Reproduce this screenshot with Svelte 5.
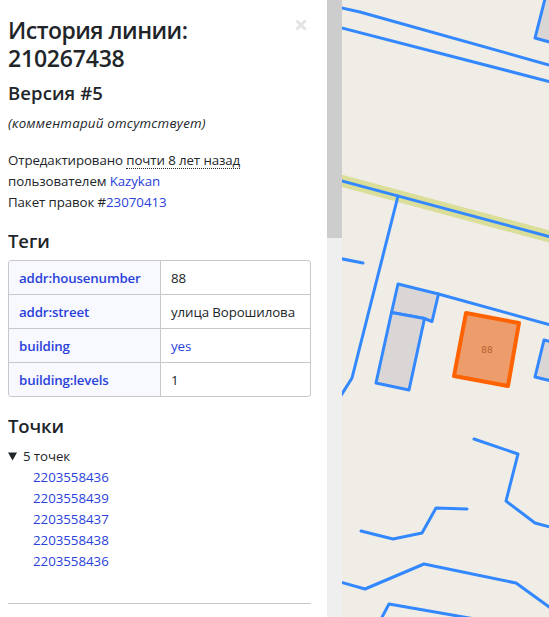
<script>
  const tags = [
    { key: 'addr:housenumber', value: '88' },
    { key: 'addr:street', value: 'улица Ворошилова' },
    { key: 'building', value: 'yes', link: true },
    { key: 'building:levels', value: '1' },
  ];
  const nodes = ['2203558436', '2203558439', '2203558437', '2203558438', '2203558436'];
  const ways = [
    '340,7.5 360,12 549,65',
    '340,27.5 549,81.5',
    '340,180.5 549,236.5',
    '398,196 352,378 340,397',
    '340,258.5 363,263',
    '438.500,294 549,324.500',
    '474,439 518,454 506,501 535,523 552,527.500',
    '361,531 393,539 422,533 436,508 467,509',
    '340,582 365,589 424,564 516,583 552,609',
    '380,621 389,604 475,619',
  ];
  const outline = '466,313 519,323 508,386 454,376';
  const buildings = [
    '398,284 438.500,294 432,321.500 424.500,318.500 391.500,312.500',
    '391.500,312.500 424.500,318.500 409,390 376,383',
    '546,-5 535,38 560,45 560,-5',
    '544,340 535,377 560,383 560,344',
  ];
</script>

<div class="page">
  <aside class="sidebar">
    <header>
      <h2><span>История линии:</span> <span class="id">210267438</span></h2>
      <button aria-label="Закрыть">
        <svg width="12" height="12" viewBox="0 0 12 12"><path d="M1.500 1.500L10.500 10.500M10.500 1.500L1.500 10.500" /></svg>
      </button>
    </header>
    <h4 class="version">Версия #5</h4>
    <p class="comment"><em>(комментарий отсутствует)</em></p>
    <div class="details">
      <div>Отредактировано <abbr>почти 8 лет назад</abbr></div>
      <div>пользователем <a href="#user">Kazykan</a></div>
      <div>Пакет правок #<a class="num" href="#changeset">23070413</a></div>
    </div>
    <h4 class="tagtitle">Теги</h4>
    <div class="tags">
      {#each tags as tag}
        <div class="row">
          <div class="key"><a href="#key">{tag.key}</a></div>
          <div class="value">
            {#if tag.link}<a href="#value">{tag.value}</a>{:else}{tag.value}{/if}
          </div>
        </div>
      {/each}
    </div>
    <h4 class="nodetitle">Точки</h4>
    <div class="summary">
      <svg width="9" height="9" viewBox="0 0 9 9"><path d="M0 0.500H9L4.500 8.500Z" /></svg>
      <span>5 точек</span>
    </div>
    <ul>
      {#each nodes as node}<li><a class="num" href="#node">{node}</a></li>{/each}
    </ul>
    <hr />
  </aside>
  <div class="scrollbar"><div class="thumb"></div></div>
  <svg class="map" viewBox="342 0 207 617" width="207" height="617">
    <path class="road" d="M335 179L555 238" />
    {#each buildings as b}<polygon class="building" points={b} />{/each}
    {#each ways as w}<polyline class="way" points={w} />{/each}
    <polygon class="base" points={outline} />
    <text x="487" y="353" text-anchor="middle">88</text>
    <polygon class="selected" points={outline} />
  </svg>
</div>

<style>
  .page {
    display: flex;
    width: 549px;
    height: 617px;
    overflow: hidden;
    background: #fff;
    color: #212529;
    font: 13.3px/21px "Open Sans", "Noto Sans", sans-serif;
    letter-spacing: -0.1px;
  }
  .sidebar {
    box-sizing: border-box;
    width: 327px;
    padding: 16px 16px 0 8px;
    white-space: nowrap;
  }
  header { display: flex; justify-content: space-between; }
  h2, h4, p, ul { margin: 0; padding: 0; }
  h2 { font-size: 23px; line-height: 28px; font-weight: 600; letter-spacing: -0.5px; }
  h2 span { display: block; }
  h2 .id { letter-spacing: -0.2px; }
  h4 { font-size: 18.5px; line-height: 24px; font-weight: 600; letter-spacing: -0.1px; }
  button { display: flex; border: 0; padding: 0; margin: 3px 4px 0 0; width: 12px; height: 12px; background: none; }
  button path { stroke: #e3e3e3; stroke-width: 3; }
  .version { margin-top: 9px; letter-spacing: 0.1px; }
  .comment { margin-top: 8px; letter-spacing: 0.24px; }
  .details { margin-top: 16px; }
  a { color: #2a41da; text-decoration: none; }
  .num { letter-spacing: -0.03px; }
  abbr { border-bottom: 1px dotted #212529; display: inline-block; line-height: 16px; }
  .tagtitle { margin-top: 16px; }
  .tags {
    margin-top: 7px;
    width: 301px;
    border: 1px solid #c8c8ca;
    border-radius: 3px;
    overflow: hidden;
  }
  .row { display: flex; height: 33px; line-height: 35px; }
  .row + .row { border-top: 1px solid #c8c8ca; }
  .key { box-sizing: border-box; width: 152px; padding-left: 10px; border-right: 1px solid #c8c8ca; background: #f8f9ff; font-weight: 600; letter-spacing: -0.15px; }
  .value { padding-left: 10px; }
  .nodetitle { margin-top: 17px; }
  .summary { display: flex; align-items: center; gap: 6px; margin-top: 8px; }
  .summary path { fill: #212529; }
  ul { list-style: none; padding-left: 25px; }
  hr { margin: 31px 0 0; border: 0; height: 1px; background: #c8c8ca; }
  .scrollbar { width: 15px; background: #efefef; }
  .thumb { height: 238px; background: #cdcdcd; }
  .map { display: block; background: #efede5; }
  .road { stroke: #dade98; stroke-width: 12; }
  .way { fill: none; stroke: #3388ff; stroke-width: 3; stroke-linecap: round; stroke-linejoin: round; }
  .building { fill: #dad6d6; stroke: #3388ff; stroke-width: 3; stroke-linejoin: round; }
  .base { fill: #dad6d6; }
  .selected { fill: #ff6200; fill-opacity: 0.5; stroke: #ff6200; stroke-width: 4; stroke-linejoin: round; }
  text { font: 9px "DejaVu Sans", sans-serif; fill: #666; letter-spacing: 0; }
</style>
